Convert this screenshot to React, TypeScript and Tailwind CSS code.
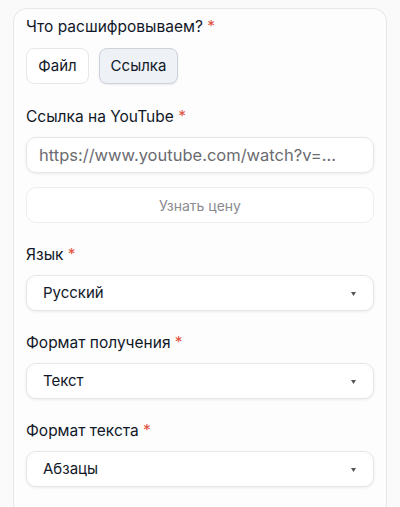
import React from "react";

function Label({ children }: { children: React.ReactNode }) {
  return (
    <div className="h-5 leading-5 text-[15.5px] text-[#111827]">
      {children} <span className="text-[#e0533f]">*</span>
    </div>
  );
}

function Select({ value }: { value: string }) {
  return (
    <div className="mt-[10px] h-9 rounded-[10px] border border-[#e5e7eb] bg-white shadow-[0_1px_3px_rgba(0,0,0,0.08)] flex items-center justify-between pl-[16px] pr-[17px]">
      <span className="text-[15px] text-[#111827]">{value}</span>
      <svg width="5" height="4" viewBox="0 0 5 4" className="mt-[1px]">
        <path d="M0 0 L5 0 L2.5 4 Z" fill="#555" />
      </svg>
    </div>
  );
}

export default function App() {
  return (
    <div className="min-h-[507px] bg-[#fafafb] pt-2 px-[13px]" style={{ fontFamily: "Inter, 'Noto Sans', sans-serif" }}>
      <div className="rounded-t-[14px] border border-b-0 border-[#e6e7eb] bg-[#fdfdfe] px-3 pt-2 pb-6 min-h-[520px]">
        <Label>Что расшифровываем?</Label>
        <div className="mt-[11px] flex gap-[10px]">
          <div className="h-9 w-[63px] rounded-[8px] border border-[#e5e7eb] bg-white flex items-center justify-center text-[15px] text-[#111827]">
            Файл
          </div>
          <div className="h-9 w-[79px] rounded-[8px] border border-[#cdd3dd] bg-[#eef1f6] flex items-center justify-center text-[15px] text-[#111827] shadow-[0_1px_2px_rgba(0,0,0,0.08)]">
            Ссылка
          </div>
        </div>
        <div className="mt-[23px]">
          <Label>Ссылка на YouTube</Label>
        </div>
        <div className="mt-[10px] h-9 rounded-[10px] border border-[#e5e7eb] bg-white shadow-[0_1px_3px_rgba(0,0,0,0.08)] flex items-center pl-[12px]">
          <span className="text-[16.5px] text-[#6b6b70]">https://www.youtube.com/watch?v=...</span>
        </div>
        <div className="mt-[14px] h-9 rounded-[10px] border border-[#eceef1] bg-white flex items-center justify-center">
          <span className="text-[14px] text-[#8a8a8f]">Узнать цену</span>
        </div>
        <div className="mt-[22px]">
          <Label>Язык</Label>
        </div>
        <Select value="Русский" />
        <div className="mt-[22px]">
          <Label>Формат получения</Label>
        </div>
        <Select value="Текст" />
        <div className="mt-[22px]">
          <Label>Формат текста</Label>
        </div>
        <Select value="Абзацы" />
      </div>
    </div>
  );
}
